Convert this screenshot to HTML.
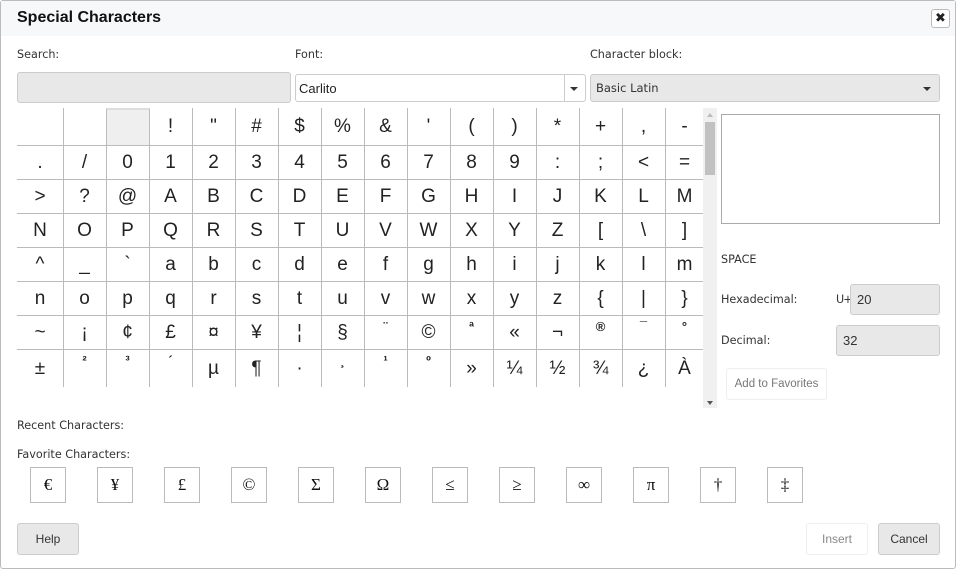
<!DOCTYPE html>
<html><head><meta charset="utf-8"><style>
*{box-sizing:border-box;margin:0;padding:0}
body{width:956px;height:569px;background:#fff;font-family:"DejaVu Sans","Liberation Sans",sans-serif;position:relative;overflow:hidden;color:#222}
.a{position:absolute}
.dlg{left:0;top:0;width:956px;height:569px;border:1px solid #bbb;border-radius:3px}
.hdr{left:1px;top:1px;width:954px;height:35px;background:#f7f8fa}
.lbl{font-size:11.2px;color:#333}
.c{position:absolute;border-right:1px solid #bbb;border-top:1px solid #bbb;text-align:center;font-family:"Liberation Sans",sans-serif;font-size:19px;color:#222}
.fav{position:absolute;top:467px;width:36px;height:36px;border:1px solid #bbb;text-align:center;font-family:"Liberation Serif",serif;font-size:17px;line-height:34px;color:#111}
.btn{position:absolute;border:1px solid #ccc;border-radius:3px;background:#e8e8e8;font-family:"Liberation Sans",sans-serif;font-size:12px;text-align:center;color:#333}
.inp{position:absolute;background:#e8e8e8;border:1px solid #ccc;border-radius:3px;font-family:"Liberation Sans",sans-serif;font-size:13px;padding-left:6px;color:#333}
.arr{position:absolute;width:0;height:0;border-left:5px solid transparent;border-right:5px solid transparent;border-top:5px solid #333}
</style></head><body>
<div class="a dlg"></div>
<div class="a hdr"></div>
<div class="a" style="left:17px;top:9px;font-family:'Liberation Sans',sans-serif;font-weight:bold;font-size:16px;color:#111">Special Characters</div>
<div class="a" style="left:931px;top:9px;width:19px;height:19px;border:1px solid #bbb;border-radius:3px;background:#fff;font-size:13px;font-weight:bold;text-align:center;line-height:17px">✖</div>
<div class="a lbl" style="left:17px;top:48px">Search:</div>
<div class="a lbl" style="left:295px;top:48px">Font:</div>
<div class="a lbl" style="left:590px;top:48px">Character block:</div>
<div class="inp" style="left:17px;top:72px;width:274px;height:31px"></div>
<div class="a" style="left:295px;top:74px;width:291px;height:28px;border:1px solid #ccc;border-radius:3px;background:#fff;font-family:'Liberation Sans',sans-serif;font-size:13px;padding:6px 0 0 3px">Carlito</div>
<div class="a" style="left:564px;top:74px;width:22px;height:28px;border-left:1px solid #ccc"></div>
<div class="arr" style="left:570px;top:87px;border-width:4px 4.5px 0"></div>
<div class="inp" style="left:590px;top:74px;width:350px;height:28px;line-height:26px;font-family:'DejaVu Sans',sans-serif;font-size:11.5px;padding-left:5px">Basic Latin</div>
<div class="arr" style="left:923px;top:87px;border-width:4px 4.5px 0"></div>
<div id="g"></div>
<div class="a" style="left:703px;top:108px;width:14px;height:300px;background:#f0f0f0"></div>
<div class="a" style="left:705px;top:122px;width:10px;height:53px;background:#c1c1c1"></div>
<div class="arr" style="left:707px;top:401px;border-width:4px 3.5px 0;border-top-color:#555"></div>
<div class="arr" style="left:707px;top:113px;border-width:0 3.5px 4px;border-top:none;border-bottom:4px solid #bbb"></div>
<div class="a" style="left:721px;top:114px;width:219px;height:110px;border:1px solid #aaa"></div>
<div class="a lbl" style="left:721px;top:253px">SPACE</div>
<div class="a lbl" style="left:721px;top:293px">Hexadecimal:</div>
<div class="a lbl" style="left:836px;top:293px;letter-spacing:-1px">U+</div>
<div class="inp" style="left:850px;top:284px;width:90px;height:31px;line-height:29px">20</div>
<div class="a lbl" style="left:721px;top:334px">Decimal:</div>
<div class="inp" style="left:836px;top:325px;width:104px;height:31px;line-height:29px">32</div>
<div class="btn" style="left:726px;top:368px;width:101px;height:32px;line-height:30px;background:#fff;border-color:#eee;color:#777;font-size:11.5px">Add to Favorites</div>
<div class="a lbl" style="left:17px;top:419px">Recent Characters:</div>
<div class="a lbl" style="left:17px;top:448px">Favorite Characters:</div>
<div class="fav" style="left:30px">€</div><div class="fav" style="left:97px">¥</div><div class="fav" style="left:164px">£</div><div class="fav" style="left:231px">©</div><div class="fav" style="left:298px">Σ</div><div class="fav" style="left:365px">Ω</div><div class="fav" style="left:432px">≤</div><div class="fav" style="left:499px">≥</div><div class="fav" style="left:566px">∞</div><div class="fav" style="left:633px">π</div><div class="fav" style="left:700px">†</div><div class="fav" style="left:767px">‡</div>
<div class="btn" style="left:17px;top:523px;width:62px;height:32px;line-height:30px">Help</div>
<div class="btn" style="left:806px;top:523px;width:62px;height:32px;line-height:30px;background:#fff;border-color:#eee;color:#888">Insert</div>
<div class="btn" style="left:878px;top:523px;width:62px;height:32px;line-height:30px">Cancel</div>
<script>
var rows=[["","","SEL","!","\"","#","$","%","&","'","(",")","*","+",",","-"],
[".","/","0","1","2","3","4","5","6","7","8","9",":",";","<","="],
[">","?","@","A","B","C","D","E","F","G","H","I","J","K","L","M"],
"NOPQRSTUVWXYZ[\\]".split(""),"^_`abcdefghijklm".split(""),"nopqrstuvwxyz{|}".split(""),
"~¡¢£¤¥¦§¨©ª«¬®¯°".split(""),"±²³´µ¶·¸¹º»¼½¾¿À".split("")];
var xs=[17];for(var i=0;i<16;i++)xs.push(63+43*i);xs[16]=703;
var ys=[108,145,179,213,247,281,315,349,386];
var small="²³´¹º®ª¯°¨¸";
var h="";
for(var r=0;r<8;r++)for(var c=0;c<16;c++){
 var ch=rows[r][c];var x=xs[c],w=xs[c+1]-xs[c]+1,y=ys[r],hh=ys[r+1]-ys[r];
 var st="left:"+x+"px;top:"+y+"px;width:"+w+"px;height:"+(hh+1)+"px;line-height:"+hh+"px;";
 if(r==0)st+="border-top:none;";
 if(c==15)st+="border-right:none;";
 if(ch=="SEL"){h+='<div class="c" style="'+st+'background:#efefef;border:1px solid #bbb;border-top:2px solid #ddd"></div>';continue}
 if(ch&&small.indexOf(ch)>=0)st+="font-size:13px;font-weight:bold;line-height:22px;";
 if(ch=="&")ch="&amp;";if(ch=="<")ch="&lt;";
 h+='<div class="c" style="'+st+'">'+ch+'</div>';
}
document.getElementById("g").innerHTML=h;
</script>
</body></html>
